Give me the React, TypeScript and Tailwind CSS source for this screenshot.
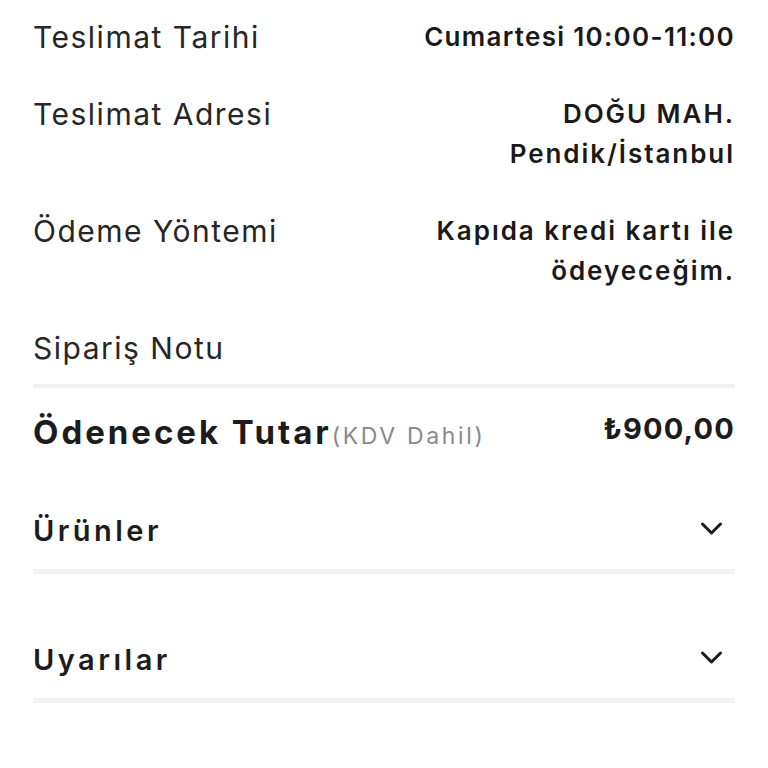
type Row = {
  label: string;
  value: string[];
  tight?: boolean;
};

const rows: Row[] = [
  { label: 'Teslimat Tarihi', value: ['Cumartesi 10:00-11:00'], tight: true },
  { label: 'Teslimat Adresi', value: ['DOĞU MAH.', 'Pendik/İstanbul'] },
  { label: 'Ödeme Yöntemi', value: ['Kapıda kredi kartı ile', 'ödeyeceğim.'] },
  { label: 'Sipariş Notu', value: [] },
];

function Chevron() {
  return (
    <svg
      viewBox="0 0 23 13"
      className="w-[23px] h-[13px] mr-[12px] mb-[4px] shrink-0"
      fill="none"
      stroke="#1a1a1a"
      strokeWidth={3}
      strokeLinecap="round"
      strokeLinejoin="round"
    >
      <polyline points="2.5,2 11.5,11 20.5,2" />
    </svg>
  );
}

function AccordionItem({ title, first }: { title: string; first?: boolean }) {
  return (
    <div>
      <button
        className={`w-full flex items-center justify-between text-left ${first ? 'mt-[56px]' : 'mt-[69px]'}`}
      >
        <span className="text-[29px] leading-[33px] font-semibold tracking-[0.12em] text-[#1c1c1c]">
          {title}
        </span>
        <Chevron />
      </button>
      <div className="h-[5px] bg-[#f2f2f2] mt-[22px]" />
    </div>
  );
}

export default function App() {
  return (
    <div className="min-h-screen bg-white px-[33px] pt-[17px] font-['Inter','Noto_Sans',sans-serif] text-[#1c1c1c]">
      <dl className="flex flex-col gap-[37px]">
        {rows.map((row) => (
          <div key={row.label} className="flex items-start justify-between gap-6">
            <dt className="text-[30px] leading-[40px] tracking-[0.05em] text-[#262626] whitespace-nowrap">
              {row.label}
            </dt>
            {row.value.length > 0 && (
              <dd
                className={`text-right text-[26px] leading-[40px] font-semibold text-[#1a1a1a] ${
                  row.tight ? 'tracking-[0.05em]' : 'tracking-[0.075em]'
                }`}
              >
                {row.value.map((line) => (
                  <div key={line}>{line}</div>
                ))}
              </dd>
            )}
          </div>
        ))}
      </dl>

      <div className="h-[4px] bg-[#f2f2f2] mt-[16px]" />

      <div className="flex items-start justify-between mt-[22px]">
        <p className="text-[33px] leading-[44px] font-bold tracking-[0.09em] text-[#1c1c1c] whitespace-nowrap">
          Ödenecek Tutar
          <span className="text-[23px] font-normal tracking-[0.115em] text-[#8a8a8a]">(KDV Dahil)</span>
        </p>
        <p className="text-[29px] leading-[37px] font-bold tracking-[0.04em] text-[#1c1c1c]">₺900,00</p>
      </div>

      <AccordionItem title="Ürünler" first />
      <AccordionItem title="Uyarılar" />
    </div>
  );
}
